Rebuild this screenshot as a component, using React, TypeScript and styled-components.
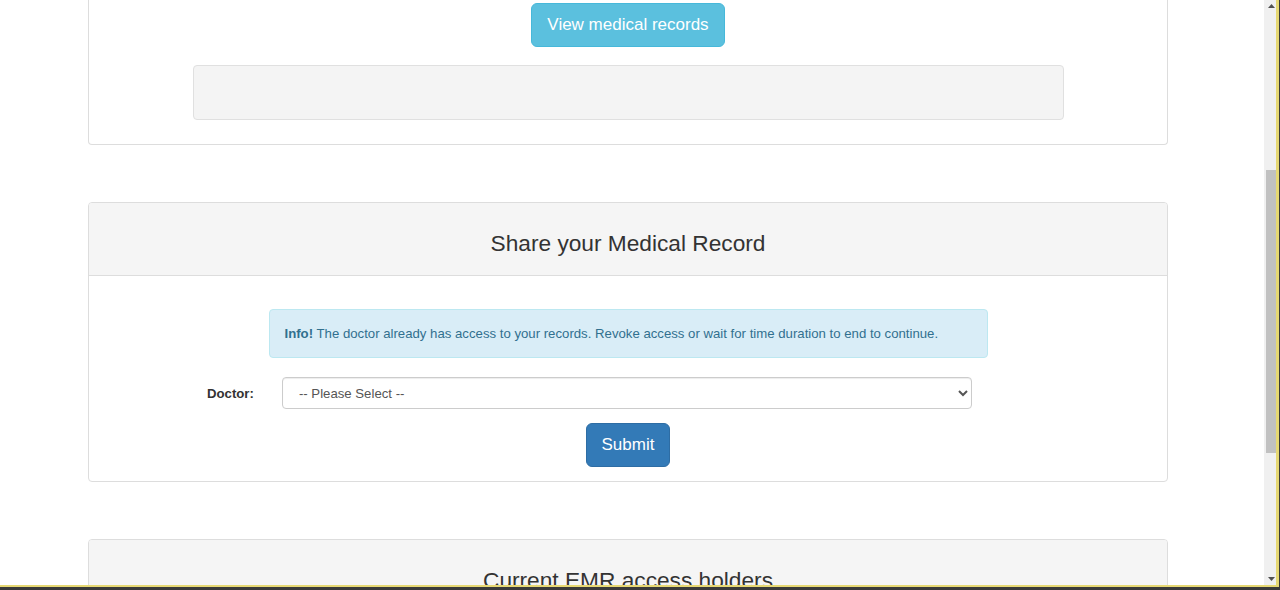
import React from 'react';
import styled, {createGlobalStyle} from 'styled-components';

const GlobalStyle = createGlobalStyle`
  html, body {
    margin: 0;
    padding: 0;
    background: #ffffff;
  }
  body {
    font-family: "Liberation Sans", Arial, Helvetica, sans-serif;
    color: #333333;
  }
  * {
    box-sizing: border-box;
  }
`;

const Frame = styled.div`
  width: 1280px;
  height: 590px;
  border-right: 1px solid #3a3a3a;
  border-bottom: 3px solid #3a3a3a;
  overflow: hidden;
`;

const Window = styled.div`
  display: flex;
  height: 100%;
  border-right: 3px solid #e6d873;
  border-bottom: 2px solid #e6d873;
  background: #ffffff;
`;

const Viewport = styled.main`
  flex: 1;
  overflow: hidden;
  padding-left: 88px;
`;

const Scrollbar = styled.div`
  width: 12px;
  display: flex;
  flex-direction: column;
  align-items: stretch;
  background: #f0f0f0;
`;

const ArrowBox = styled.div`
  height: 12px;
  display: flex;
  align-items: center;
  justify-content: center;
  padding-left: 2px;
`;

const Track = styled.div`
  flex: 1;
  display: flex;
  flex-direction: column;
  padding-left: 2px;
`;

const Thumb = styled.div<{$top: number; $height: number}>`
  margin-top: ${p => p.$top}px;
  height: ${p => p.$height}px;
  background: #c1c1c1;
`;

const Card = styled.section<{$scrolled?: boolean}>`
  width: 1080px;
  border: 1px solid #dddddd;
  border-radius: 4px;
  margin-bottom: 57px;
  background: #ffffff;
  ${p =>
    p.$scrolled &&
    `
    border-top: none;
    border-top-left-radius: 0;
    border-top-right-radius: 0;
  `}
`;

const CardHeading = styled.header`
  background: #f5f5f5;
  border-bottom: 1px solid #dddddd;
  border-top-left-radius: 3px;
  border-top-right-radius: 3px;
  padding: 27px 15px 19px;
  text-align: center;
`;

const Title = styled.h3`
  margin: 0;
  font-size: 22.7px;
  line-height: 26px;
  font-weight: 400;
  color: #333333;
`;

const CardBody = styled.div<{$top: number; $bottom: number}>`
  display: flex;
  flex-direction: column;
  align-items: center;
  padding-top: ${p => p.$top}px;
  padding-bottom: ${p => p.$bottom}px;
`;

const Button = styled.button<{$variant: 'info' | 'primary'}>`
  font-family: "Liberation Sans", Arial, Helvetica, sans-serif;
  font-size: 17px;
  line-height: 24px;
  padding: 9px 15px;
  border-radius: 6px;
  border: 1px solid
    ${p => (p.$variant === 'info' ? '#46b8da' : '#2e6da4')};
  background: ${p => (p.$variant === 'info' ? '#5bc0de' : '#337ab7')};
  color: #ffffff;
  cursor: pointer;
`;

const Well = styled.div`
  width: 871px;
  height: 55px;
  margin-top: 18px;
  background: #f4f4f4;
  border: 1px solid #e0e0e0;
  border-radius: 4px;
`;

const Alert = styled.div`
  width: 719px;
  padding: 14px 15px;
  font-size: 13.2px;
  line-height: 19px;
  color: #31708f;
  background: #d9edf7;
  border: 1px solid #bce8f1;
  border-radius: 4px;

  strong {
    font-weight: 700;
  }
`;

const FormRow = styled.div`
  align-self: stretch;
  display: flex;
  align-items: center;
  gap: 28px;
  padding-left: 118px;
  margin-top: 19px;
  margin-bottom: 14px;
`;

const Label = styled.label`
  font-size: 13.2px;
  font-weight: 700;
  color: #333333;
`;

const Select = styled.select`
  width: 690px;
  height: 32px;
  padding: 5px 12px;
  font-family: "Liberation Sans", Arial, Helvetica, sans-serif;
  font-size: 13.2px;
  color: #555555;
  background: #ffffff;
  border: 1px solid #cccccc;
  border-radius: 4px;
  box-shadow: inset 0 1px 1px rgba(0, 0, 0, 0.075);
`;

function Arrow({down}: {down?: boolean}) {
  return (
    <svg width="7" height="4" viewBox="0 0 7 4">
      <path d={down ? 'M0 0 H7 L3.5 4 Z' : 'M0 4 H7 L3.5 0 Z'} fill="#505050" />
    </svg>
  );
}

export default function App() {
  return (
    <>
      <GlobalStyle />
      <Frame>
        <Window>
          <Viewport>
            <Card $scrolled>
              <CardBody $top={3} $bottom={24}>
                <Button $variant="info">View medical records</Button>
                <Well />
              </CardBody>
            </Card>

            <Card>
              <CardHeading>
                <Title>Share your Medical Record</Title>
              </CardHeading>
              <CardBody $top={33} $bottom={14}>
                <Alert>
                  <strong>Info!</strong> The doctor already has access to your
                  records. Revoke access or wait for time duration to end to
                  continue.
                </Alert>
                <FormRow>
                  <Label htmlFor="doctor">Doctor:</Label>
                  <Select id="doctor" defaultValue="">
                    <option value="">-- Please Select --</option>
                  </Select>
                </FormRow>
                <Button $variant="primary">Submit</Button>
              </CardBody>
            </Card>

            <Card>
              <CardHeading>
                <Title>Current EMR access holders</Title>
              </CardHeading>
            </Card>
          </Viewport>
          <Scrollbar>
            <ArrowBox>
              <Arrow />
            </ArrowBox>
            <Track>
              <Thumb $top={158} $height={283} />
            </Track>
            <ArrowBox>
              <Arrow down />
            </ArrowBox>
          </Scrollbar>
        </Window>
      </Frame>
    </>
  );
}
